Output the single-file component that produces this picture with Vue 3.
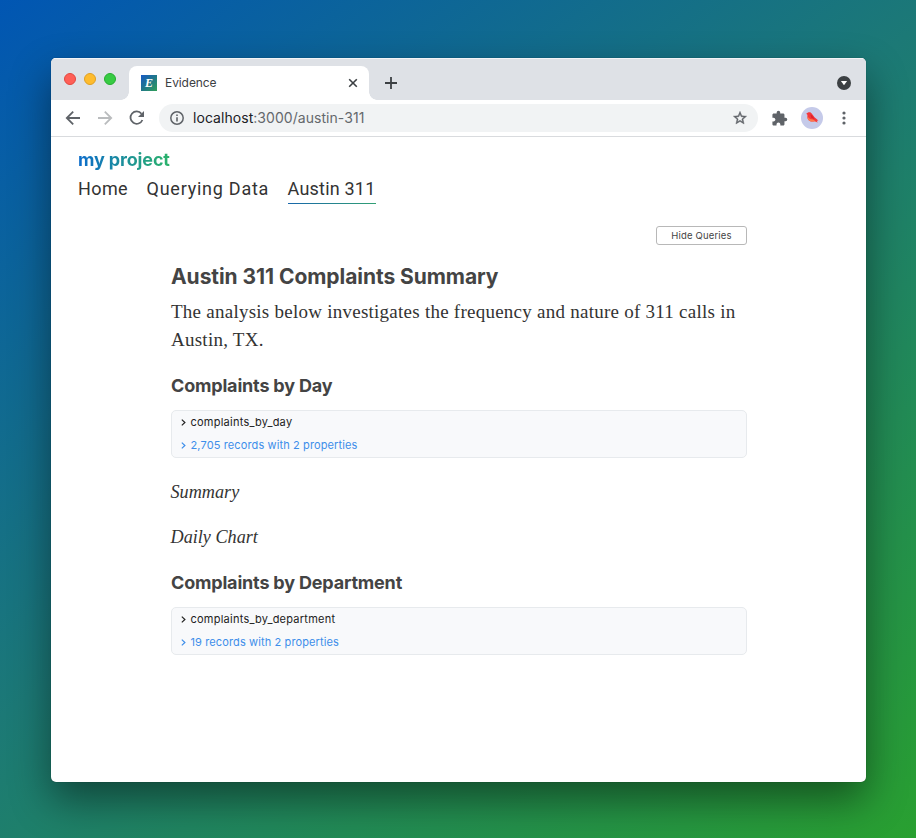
<script setup>
const links = ['Home', 'Querying Data', 'Austin 311']
const queries = {
  day: { name: 'complaints_by_day', result: '2,705 records with 2 properties' },
  department: { name: 'complaints_by_department', result: '19 records with 2 properties' }
}
const order = ['day', 'department']
</script>

<template>
  <div class="desktop">
    <div class="window">
      <div class="tabstrip">
        <div class="lights"><i class="red"></i><i class="yellow"></i><i class="green"></i></div>
        <div class="tab">
          <span class="favicon">E</span>
          <span class="tab-title">Evidence</span>
          <svg class="close" width="10" height="10" viewBox="0 0 10 10"><path d="M1.2 1.2 8.8 8.8M8.8 1.2 1.2 8.8" stroke="#3c4043" stroke-width="1.6" /></svg>
        </div>
        <svg class="plus" width="12" height="12" viewBox="0 0 12 12"><path d="M6 0V12M0 6H12" stroke="#3c4043" stroke-width="1.8" /></svg>
        <svg class="tab-search" width="14" height="14" viewBox="0 0 14 14"><circle cx="7" cy="7" r="7" fill="#3c4043" /><path d="M3.9 5H10.1L7 9.3Z" fill="#fff" /></svg>
      </div>

      <div class="toolbar">
        <svg class="back" width="16" height="16" viewBox="0 0 16 16" fill="none" stroke="#5f6368" stroke-width="1.8"><path d="M15 8H2.3M8.2 1.6 1.8 8l6.4 6.4" /></svg>
        <svg class="forward" width="16" height="16" viewBox="0 0 16 16" fill="none" stroke="#babcbe" stroke-width="1.8"><path d="M1 8h12.7M7.8 1.6 14.2 8l-6.4 6.4" /></svg>
        <svg class="reload" width="16" height="16" viewBox="0 0 16 16"><path d="M13.4 10A6.2 6.2 0 1 1 12.5 3.7" fill="none" stroke="#5f6368" stroke-width="1.8" /><path d="M15 1V7H9Z" fill="#5f6368" /></svg>
        <div class="address">
          <svg width="14" height="14" viewBox="0 0 14 14"><circle cx="7" cy="7" r="6.2" fill="none" stroke="#5f6368" stroke-width="1.5" /><path d="M7 6.2V10.4M7 3.4V5" stroke="#5f6368" stroke-width="1.6" /></svg>
          <span class="url"><b>localhost</b>:3000/austin-311</span>
          <svg class="star" width="16" height="16" viewBox="0 0 24 24"><path d="M22 9.24l-7.19-.62L12 2 9.19 8.63 2 9.24l5.46 4.73L5.82 21 12 17.27 18.18 21l-1.63-7.03L22 9.24zM12 15.4l-3.76 2.27 1-4.28-3.32-2.88 4.38-.38L12 6.1l1.71 4.04 4.38.38-3.32 2.88 1 4.28L12 15.4z" fill="#5f6368" stroke="#5f6368" stroke-width=".6" /></svg>
        </div>
        <svg class="puzzle" width="17" height="17" viewBox="0 0 24 24"><path d="M20.5 11H19V7c0-1.1-.9-2-2-2h-4V3.500a2.500 2.500 0 0 0-5 0V5H4c-1.100 0-1.990.9-1.990 2v3.800H3.500c1.490 0 2.700 1.210 2.700 2.700s-1.210 2.700-2.700 2.700H2V20c0 1.100.9 2 2 2h3.800v-1.500c0-1.490 1.210-2.700 2.700-2.700s2.700 1.210 2.700 2.700V22H17c1.100 0 2-.9 2-2v-4h1.500a2.500 2.500 0 0 0 0-5z" fill="#5f6368" /></svg>
        <svg class="avatar" width="22" height="22" viewBox="0 0 22 22">
          <circle cx="11" cy="11" r="11" fill="#c5cae9" />
          <path d="M5.200 6.800 7 5.400C8.600 4.800 9.900 5.300 10.700 6.500L13.500 10.200 17.400 13.600 15.800 13.700 16.700 15.400 13.500 14.200C9.600 15.500 6.300 13.400 6.400 10V7.800Z" fill="#f5363a" />
          <path d="M6.400 9.600 9 12 12 12.600 16.700 15.400 13.500 14.200C9.600 15.500 6.400 13.400 6.400 9.600Z" fill="#ff7a4d" />
          <path d="M9.400 7.400C11.200 8.400 12.500 10 13.600 12.300L10.300 10.800Z" fill="#d9232e" />
        </svg>
        <svg class="more" width="4" height="14" viewBox="0 0 4 14" fill="#5f6368"><circle cx="2" cy="2" r="1.600" /><circle cx="2" cy="7" r="1.600" /><circle cx="2" cy="12" r="1.600" /></svg>
      </div>

      <div class="page">
        <header>
          <div class="brand">my project</div>
          <nav>
            <a v-for="(link, i) in links" :key="link" :class="['link' + i, { active: i === 2 }]">{{ link }}</a>
          </nav>
        </header>
        <main>
          <div class="actions"><button>Hide Queries</button></div>
          <h1>Austin 311 Complaints Summary</h1>
          <p class="intro">The analysis below investigates the frequency and nature of 311 calls in<br>Austin, TX.</p>
          <template v-for="key in order" :key="key">
            <h2 :class="key">{{ key === 'day' ? 'Complaints by Day' : 'Complaints by Department' }}</h2>
            <section class="query">
              <div class="row">
                <svg width="5" height="7" viewBox="0 0 5 7"><path d="M.8.6 3.900 3.500.8 6.400" fill="none" stroke="currentColor" stroke-width="1.200" /></svg>
                <span>{{ queries[key].name }}</span>
              </div>
              <div class="row result">
                <svg width="5" height="7" viewBox="0 0 5 7"><path d="M.8.6 3.900 3.500.8 6.400" fill="none" stroke="currentColor" stroke-width="1.200" /></svg>
                <span>{{ queries[key].result }}</span>
              </div>
            </section>
            <template v-if="key === 'day'">
              <p class="note"><em>Summary</em></p>
              <p class="note"><em>Daily Chart</em></p>
            </template>
          </template>
        </main>
      </div>
    </div>
  </div>
</template>

<style>
body { margin: 0; overflow: hidden; }
</style>

<style scoped>
.desktop { box-sizing: border-box; width: 916px; height: 838px; padding: 58px 50px 56px 51px; background: linear-gradient(143deg, #0156b3 0%, #1c7976 47%, #29a030 100%); font-family: Inter, "Liberation Sans", sans-serif; overflow: hidden; }
.window { height: 724px; border-radius: 5px; background: #fff; overflow: hidden; box-shadow: 0 0 1px rgba(0,0,0,.5), 0 18px 40px rgba(0,0,0,.45); }
svg { display: block; flex: none; }
.tabstrip { box-sizing: border-box; height: 42px; padding-left: 13px; display: flex; background: #dee1e6; box-shadow: inset 0 1px #f3f4f6; }
.lights { display: flex; gap: 8px; padding-top: 15px; width: 65px; }
.lights i { box-sizing: border-box; width: 12px; height: 12px; border-radius: 50%; border: 1px solid; }
.red { background: #ff5f57; border-color: #e2473f !important; }
.yellow { background: #febc2e; border-color: #dfa023 !important; }
.green { background: #37cb43; border-color: #24ad30 !important; }
.tab { position: relative; box-sizing: border-box; width: 240px; height: 34px; margin-top: 8px; padding: 0 12px; display: flex; align-items: center; background: #fff; border-radius: 8px 8px 0 0; }
.tab::before, .tab::after { content: ""; position: absolute; bottom: 0; width: 8px; height: 8px; }
.tab::before { right: 100%; background: radial-gradient(circle at 0 0, transparent 7.5px, #fff 8px); }
.tab::after { left: 100%; background: radial-gradient(circle at 100% 0, transparent 7.5px, #fff 8px); }
.favicon { width: 16px; height: 16px; color: #fff; background: linear-gradient(135deg, #1859c5, #20788a 50%, #31a057); font: italic bold 12px/16px "Liberation Serif", serif; text-align: center; }
.tab-title { margin-left: 8px; font-size: 12px; line-height: 16px; color: #3c4043; letter-spacing: -.08px; }
.close { margin-left: auto; margin-right: -1px; }
.plus { margin: 19px 0 0 16px; }
.tab-search { margin: 18px 15px 0 auto; }
.toolbar { box-sizing: border-box; height: 37px; display: flex; align-items: center; padding: 0 20px 0 14px; border-bottom: 1px solid #d9dbde; }
.forward { margin-left: 16px; }
.reload { margin-left: 16px; }
.address { box-sizing: border-box; display: flex; align-items: center; margin-left: 14px; width: 599px; height: 28px; border-radius: 14px; background: #f1f3f4; padding: 0 10px 0 11px; }
.url { margin-left: 9px; font-size: 14px; line-height: 20px; color: #64686c; white-space: nowrap; letter-spacing: .05px; }
.url b { color: #202124; font-weight: 400; }
.star { margin-left: auto; }
.puzzle { margin-left: 13px; }
.avatar { margin-left: 13px; }
.more { margin-left: auto; }
.page { padding: 12px 27px 0; }
.brand { width: max-content; font-size: 18px; line-height: 22px; font-weight: 700; color: transparent; background: linear-gradient(90deg, #0c6ccb, #2bb36a); background-clip: text; letter-spacing: -.15px; }
nav { display: flex; gap: 18.5px; margin-top: 6px; }
nav a { padding-bottom: 2px; font-family: Roboto, sans-serif; font-size: 18px; line-height: 24px; color: #333; letter-spacing: .75px; white-space: nowrap; border-bottom: 1px solid transparent; }
nav .link0 { letter-spacing: .4px; }
nav .link2 { letter-spacing: .2px; }
nav a.active { border-image: linear-gradient(90deg, #1766ac, #32a173) 1; }
main { width: 576px; margin: 22px 0 0 93px; }
.actions { display: flex; justify-content: flex-end; height: 19px; }
button { box-sizing: border-box; width: 91px; height: 19px; padding: 0; border: 1px solid #b8b8b8; border-radius: 3px; background: #fff; color: #444; font: 9.5px/17px Inter, sans-serif; letter-spacing: .17px; white-space: nowrap; }
h1 { margin: 18px 0 0; font-size: 21px; line-height: 28px; font-weight: 700; color: #444; white-space: nowrap; letter-spacing: -.06px; }
.intro { margin: 7px 0 0; height: 56px; font: 19px/28px "Liberation Serif", serif; color: #333; white-space: nowrap; letter-spacing: .25px; }
h2 { margin: 20px 0 0; font-size: 18px; line-height: 24px; font-weight: 700; color: #444; white-space: nowrap; letter-spacing: -.18px; }
.query { box-sizing: border-box; height: 48px; margin-top: 12px; padding-left: 9px; border: 1px solid #e7eaed; border-radius: 5px; background: #f8f9fb; }
.row { display: flex; align-items: center; gap: 4.5px; height: 23px; font-size: 11px; line-height: 23px; color: #222; letter-spacing: .24px; white-space: nowrap; }
.result { color: #3d8eea; letter-spacing: .12px; }
.note { margin: 20px 0 0 -.5px; font: 18.2px/28px "Liberation Serif", serif; color: #333; height: 28px; }
.note + .note { margin-top: 17px; }
</style>
